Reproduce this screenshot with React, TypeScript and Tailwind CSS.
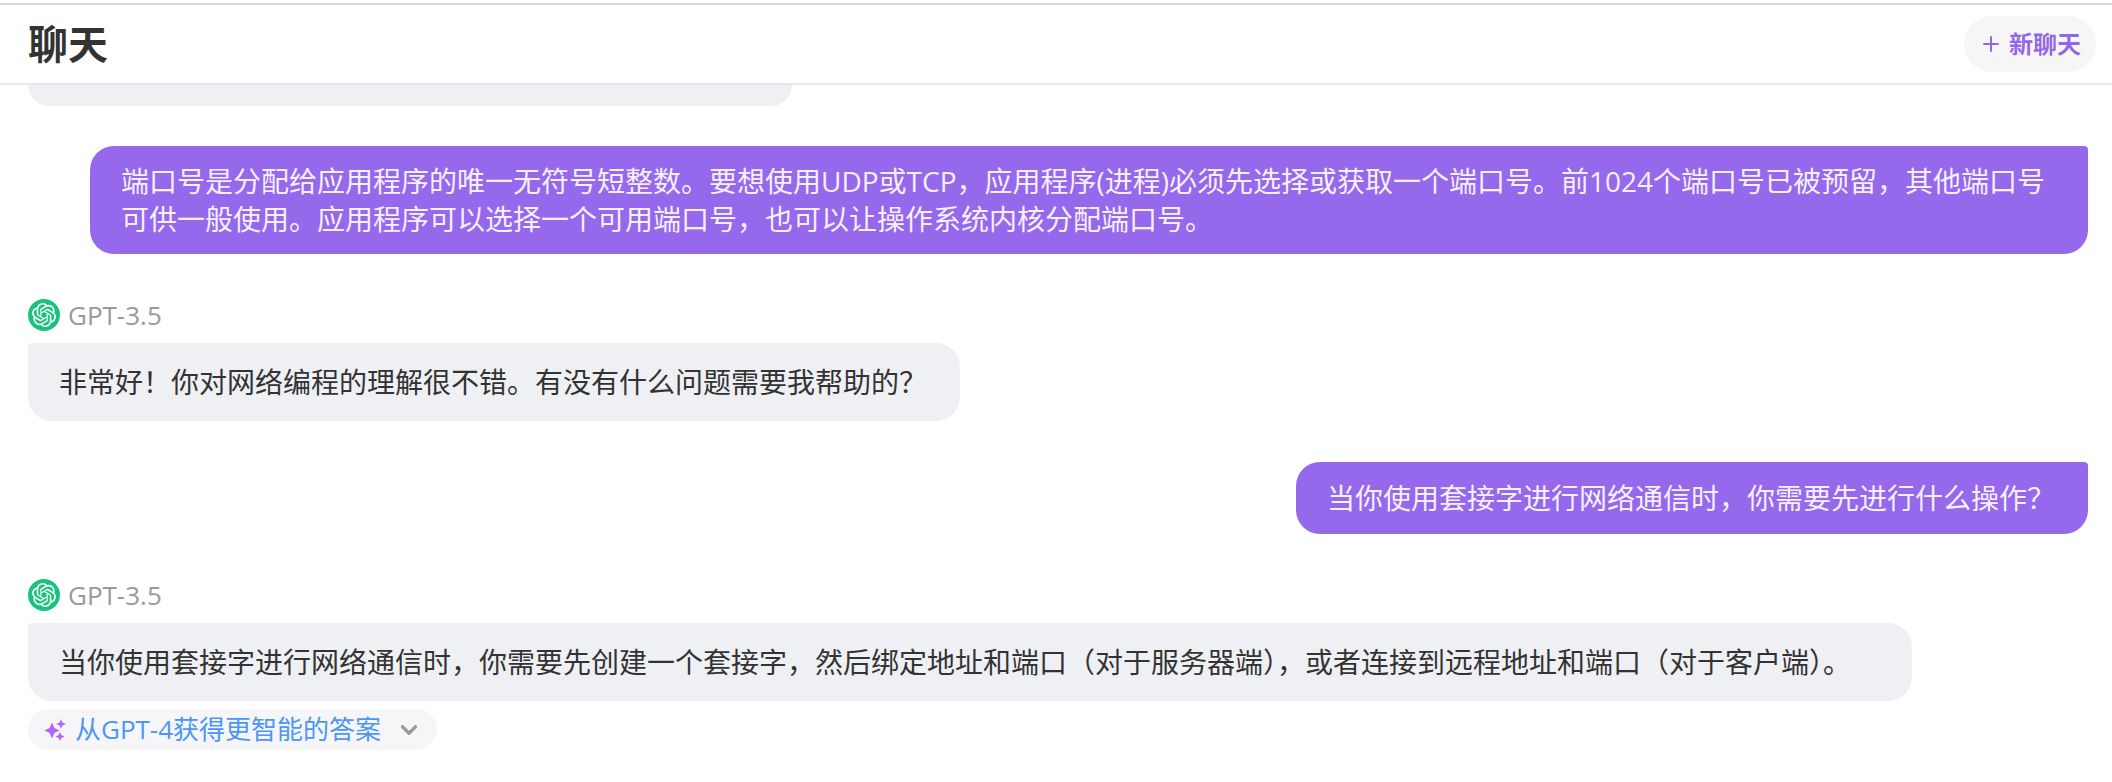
import { SiOpenai } from "react-icons/si";
import { ChevronDown, Plus } from "lucide-react";

const font = "font-['Open_Sans','Noto_Sans_CJK_SC',sans-serif]";

function Model({ className }: { className: string }) {
  return (
    <div className={`flex items-center gap-2 h-8 ${className}`}>
      <span className="flex items-center justify-center w-8 h-8 rounded-full bg-[#19c37d] text-white">
        <SiOpenai size={24} />
      </span>
      <span className="text-[26px] text-[#999999]">GPT-3.5</span>
    </div>
  );
}

function Bot({ children, w }: { children: string; w: string }) {
  return (
    <div className={`${w} h-[78px] flex items-center pl-[31px] pr-8 bg-[#eff0f4] rounded-[24px] rounded-tl-[4px] text-[28px] leading-[37px] text-[#333333] whitespace-nowrap mt-3`}>
      {children}
    </div>
  );
}

export default function App() {
  return (
    <div className={`${font} h-[782px] w-[2112px] overflow-hidden bg-white flex flex-col`}>
      <div className="mt-[3px] border-t-2 border-[#d9d9d9] border-b-2 border-b-[#e8e8e8] h-[82px] flex items-center justify-between pl-7 pr-4 shrink-0">
        <h1 className="text-[40px] font-bold text-[#333333]">聊天</h1>
        <button className="flex items-center gap-1.5 h-14 w-[132px] justify-center rounded-full bg-[#f6f6f7] text-[#9466e8] text-[24px] font-bold">
          <Plus size={24} strokeWidth={2} />
          <span>新聊天</span>
        </button>
      </div>
      <div className="flex-1 flex flex-col px-6 pl-7">
        <div className="w-[764px] h-[21px] bg-[#eff0f4] rounded-b-[24px]" />
        <div className="self-end w-[1998px] mt-10 bg-[#9668ec] rounded-[24px] rounded-tr-[4px] pl-[31px] pr-8 py-4 text-[28px] leading-[38px] text-[#f5f0ff]">
          端口号是分配给应用程序的唯一无符号短整数。要想使用UDP或TCP，应用程序(进程)必须先选择或获取一个端口号。前1024个端口号已被预留，其他端口号可供一般使用。应用程序可以选择一个可用端口号，也可以让操作系统内核分配端口号。
        </div>
        <Model className="mt-[45px]" />
        <Bot w="w-[932px]">非常好！你对网络编程的理解很不错。有没有什么问题需要我帮助的？</Bot>
        <div className="self-end mt-[41px] h-[72px] flex items-center pl-[31px] pr-[33px] bg-[#9668ec] rounded-[24px] rounded-tr-[4px] text-[28px] text-[#f5f0ff] whitespace-nowrap">
          当你使用套接字进行网络通信时，你需要先进行什么操作？
        </div>
        <Model className="mt-[45px]" />
        <Bot w="w-[1884px]">当你使用套接字进行网络通信时，你需要先创建一个套接字，然后绑定地址和端口（对于服务器端），或者连接到远程地址和端口（对于客户端）。</Bot>
        <button className="mt-2 self-start h-[41px] w-[409px] flex items-center pl-[16px] bg-[#f6f6f8] rounded-full text-[26px] text-[#4b96f8] whitespace-nowrap">
          <svg width="22" height="22" viewBox="0 0 22 22" className="mr-[9px] shrink-0" fill="#b366fa">
            <path d="M8 3.500 L10.500 9 L15.500 11.500 L10.500 14 L8 19.500 L5.500 14 L0.500 11.500 L5.500 9 Z" />
            <path d="M17 0 L18.400 3.600 L22 5 L18.400 6.400 L17 10 L15.600 6.400 L12 5 L15.600 3.600 Z" />
            <path d="M16 13 L17.400 16.100 L20.500 17.500 L17.400 18.900 L16 22 L14.600 18.900 L11.500 17.500 L14.600 16.100 Z" />
          </svg>
          <span>从GPT-4获得更智能的答案</span>
          <ChevronDown size={26} strokeWidth={3} className="ml-[15px] text-[#999999]" />
        </button>
      </div>
    </div>
  );
}
